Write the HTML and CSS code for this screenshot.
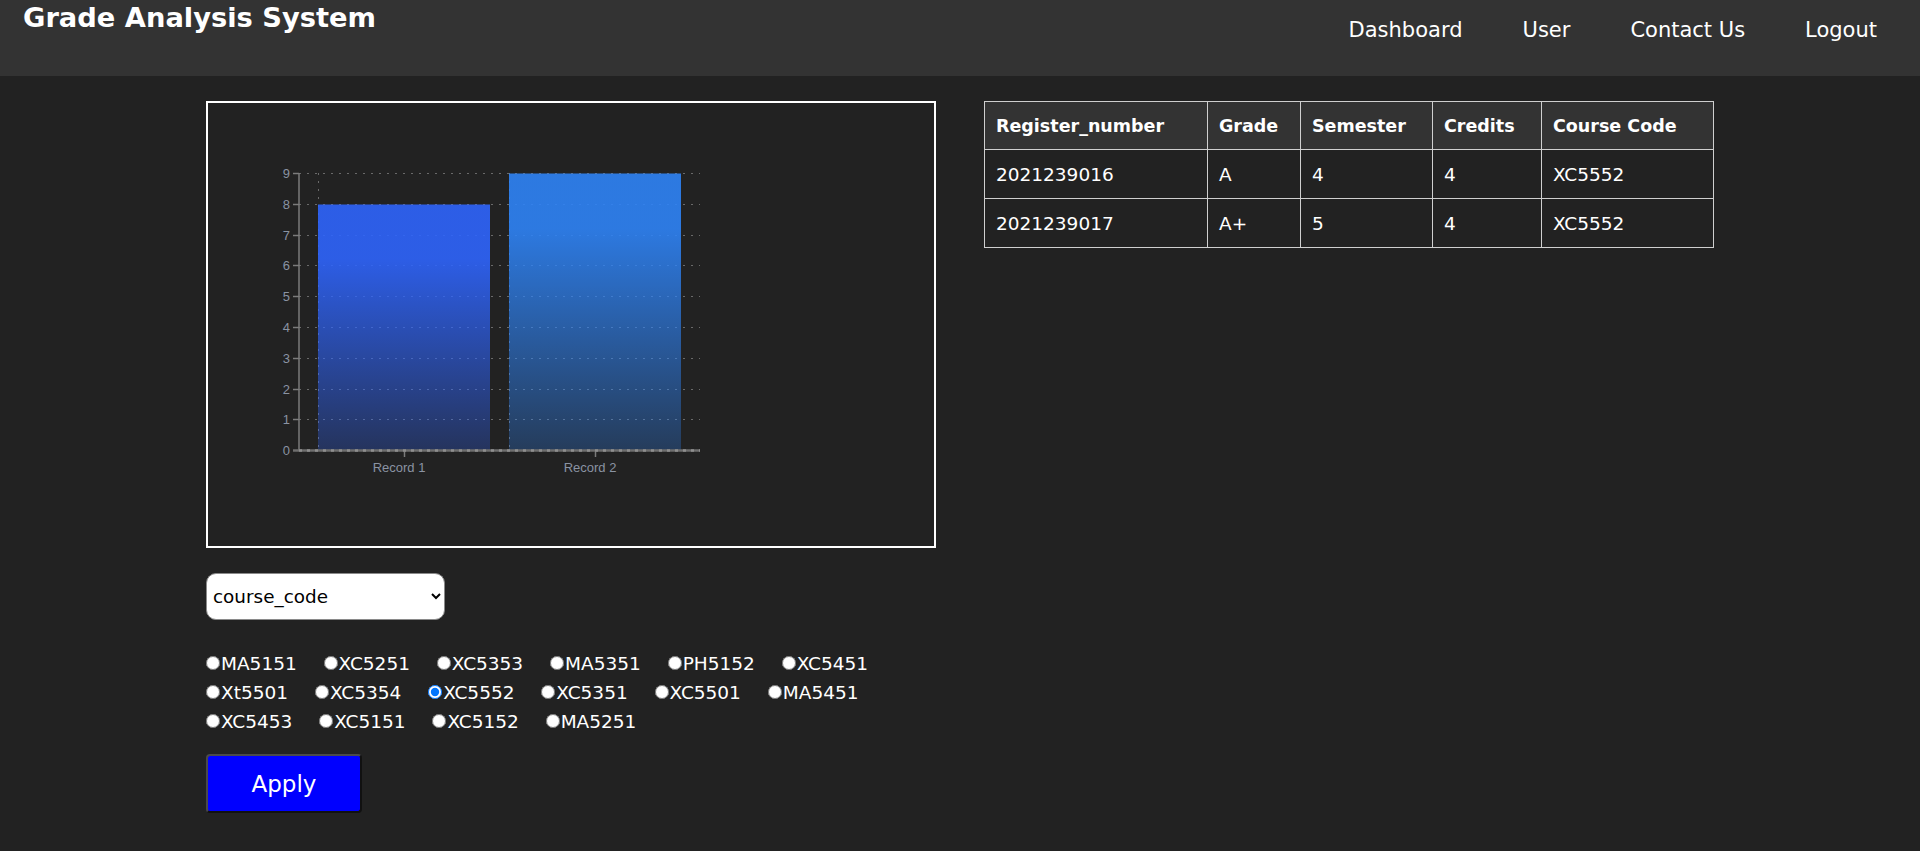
FILE: index.html
```html
<!DOCTYPE html>
<html lang="en">
<head>
<meta charset="utf-8">
<title>Grade Analysis System</title>
<link rel="stylesheet" href="styles.css">
</head>
<body>
<header class="topbar">
  <h1 class="brand">Grade Analysis System</h1>
  <nav class="nav">
    <a href="#" class="nav-link">Dashboard</a>
    <a href="#" class="nav-link">User</a>
    <a href="#" class="nav-link">Contact Us</a>
    <a href="#" class="nav-link">Logout</a>
  </nav>
</header>

<main class="page">
  <section class="left">
    <div class="chart-box">
      <svg class="chart" viewBox="208 103 726 443" width="726" height="443" xmlns="http://www.w3.org/2000/svg">
        <defs>
          <linearGradient id="bar1" x1="0" y1="0" x2="0" y2="1">
            <stop offset="0.22" stop-color="#2e64fc" stop-opacity="0.9"/>
            <stop offset="1" stop-color="#2e64fc" stop-opacity="0.27"/>
          </linearGradient>
          <linearGradient id="bar2" x1="0" y1="0" x2="0" y2="1">
            <stop offset="0.2" stop-color="#2e83f6" stop-opacity="0.9"/>
            <stop offset="1" stop-color="#2e83f6" stop-opacity="0.27"/>
          </linearGradient>
        </defs>
        <g class="grid">
          <line x1="299" y1="173.5" x2="700" y2="173.5"/>
          <line x1="299" y1="204.5" x2="700" y2="204.5"/>
          <line x1="299" y1="235.5" x2="700" y2="235.5"/>
          <line x1="299" y1="265.5" x2="700" y2="265.5"/>
          <line x1="299" y1="296.5" x2="700" y2="296.5"/>
          <line x1="299" y1="327.5" x2="700" y2="327.5"/>
          <line x1="299" y1="358.5" x2="700" y2="358.5"/>
          <line x1="299" y1="389.5" x2="700" y2="389.5"/>
          <line x1="299" y1="419.5" x2="700" y2="419.5"/>
          <line x1="318.5" y1="173" x2="318.5" y2="450"/>
          <line x1="509.5" y1="173" x2="509.5" y2="450"/>
        </g>
        <rect x="318" y="204.5" width="172" height="246" fill="url(#bar1)"/>
        <rect x="509" y="173.5" width="172" height="277" fill="url(#bar2)"/>
        <g class="axis">
          <line x1="299" y1="173" x2="299" y2="451"/>
          <line x1="293" y1="173.5" x2="299" y2="173.5"/>
          <line x1="293" y1="204.5" x2="299" y2="204.5"/>
          <line x1="293" y1="235.5" x2="299" y2="235.5"/>
          <line x1="293" y1="265.5" x2="299" y2="265.5"/>
          <line x1="293" y1="296.5" x2="299" y2="296.5"/>
          <line x1="293" y1="327.5" x2="299" y2="327.5"/>
          <line x1="293" y1="358.5" x2="299" y2="358.5"/>
          <line x1="293" y1="389.5" x2="299" y2="389.5"/>
          <line x1="293" y1="419.5" x2="299" y2="419.5"/>
          <line x1="404.5" y1="451" x2="404.5" y2="457"/>
          <line x1="595.5" y1="451" x2="595.5" y2="457"/>
        </g>
        <line class="x-axis" x1="293" y1="450.5" x2="700" y2="450.5"/>
        <line class="x-axis-dots" x1="299" y1="450.5" x2="700" y2="450.5"/>
        <g class="ticks">
          <text x="290" y="178">9</text>
          <text x="290" y="209">8</text>
          <text x="290" y="240">7</text>
          <text x="290" y="270">6</text>
          <text x="290" y="301">5</text>
          <text x="290" y="332">4</text>
          <text x="290" y="363">3</text>
          <text x="290" y="394">2</text>
          <text x="290" y="424">1</text>
          <text x="290" y="455">0</text>
        </g>
        <g class="xticks">
          <text x="399" y="472">Record 1</text>
          <text x="590" y="472">Record 2</text>
        </g>
      </svg>
    </div>

    <select class="filter">
      <option>course_code</option>
    </select>

    <div class="options">
      <label class="opt"><input type="radio" name="course">MA5151</label>
      <label class="opt"><input type="radio" name="course">XC5251</label>
      <label class="opt"><input type="radio" name="course">XC5353</label>
      <label class="opt"><input type="radio" name="course">MA5351</label>
      <label class="opt"><input type="radio" name="course">PH5152</label>
      <label class="opt"><input type="radio" name="course">XC5451</label>
      <label class="opt"><input type="radio" name="course">Xt5501</label>
      <label class="opt"><input type="radio" name="course">XC5354</label>
      <label class="opt"><input type="radio" name="course" checked>XC5552</label>
      <label class="opt"><input type="radio" name="course">XC5351</label>
      <label class="opt"><input type="radio" name="course">XC5501</label>
      <label class="opt"><input type="radio" name="course">MA5451</label>
      <label class="opt"><input type="radio" name="course">XC5453</label>
      <label class="opt"><input type="radio" name="course">XC5151</label>
      <label class="opt"><input type="radio" name="course">XC5152</label>
      <label class="opt"><input type="radio" name="course">MA5251</label>
    </div>

    <button class="apply" type="button">Apply</button>
  </section>

  <section class="right">
    <table class="grades">
      <colgroup>
        <col class="c-reg">
        <col class="c-grade">
        <col class="c-sem">
        <col class="c-cred">
        <col class="c-code">
      </colgroup>
      <thead>
        <tr>
          <th>Register_number</th>
          <th>Grade</th>
          <th>Semester</th>
          <th>Credits</th>
          <th>Course Code</th>
        </tr>
      </thead>
      <tbody>
        <tr>
          <td>2021239016</td>
          <td>A</td>
          <td>4</td>
          <td>4</td>
          <td>XC5552</td>
        </tr>
        <tr>
          <td>2021239017</td>
          <td>A+</td>
          <td>5</td>
          <td>4</td>
          <td>XC5552</td>
        </tr>
      </tbody>
    </table>
  </section>
</main>
</body>
</html>
```

FILE: styles.css
```css
* {
  box-sizing: border-box;
}

html, body {
  margin: 0;
  padding: 0;
}

body {
  background: #222222;
  color: #ffffff;
  font-family: "DejaVu Sans", Verdana, sans-serif;
  min-height: 851px;
}

/* ---------- top bar ---------- */
.topbar {
  height: 76px;
  background: #333333;
  display: flex;
  justify-content: space-between;
  align-items: flex-start;
  padding: 0 13px 0 23px;
}

.brand {
  margin: 0;
  padding-top: 2px;
  font-size: 27.3px;
  font-weight: bold;
  color: #ffffff;
  line-height: normal;
}

.nav {
  display: flex;
  padding-top: 18px;
}

.nav-link {
  color: #ffffff;
  text-decoration: none;
  font-size: 21px;
  padding: 0 30px;
  line-height: normal;
}

/* ---------- page ---------- */
.page {
  width: 1508px;
  margin: 0 auto;
  padding-top: 25px;
  display: flex;
  gap: 48px;
  align-items: flex-start;
}

.left {
  width: 730px;
  display: flex;
  flex-direction: column;
  align-items: flex-start;
}

.chart-box {
  width: 730px;
  height: 447px;
  border: 2px solid #ffffff;
}

.chart {
  display: block;
}

.grid line {
  stroke: #6a6a6a;
  stroke-width: 1;
  stroke-dasharray: 2 6;
}

.axis line {
  stroke: #7b7b7b;
  stroke-width: 1.5;
}

.x-axis {
  stroke: #6e6e6e;
  stroke-width: 2.5;
}

.x-axis-dots {
  stroke: #8e8e8e;
  stroke-width: 2.5;
  stroke-dasharray: 3 5;
}

.ticks text {
  font-family: "Liberation Sans", Arial, sans-serif;
  font-size: 13px;
  fill: #8a93a2;
  text-anchor: end;
}

.xticks text {
  font-family: "Liberation Sans", Arial, sans-serif;
  font-size: 13px;
  fill: #8a93a2;
  text-anchor: middle;
}

/* ---------- filter ---------- */
.filter {
  margin-top: 25px;
  width: 239px;
  height: 47px;
  background-color: #ffffff;
  color: #000000;
  border: 1px solid #8a8a8a;
  border-radius: 10px;
  padding: 0 8px 0 2px;
  font-family: "DejaVu Sans", Verdana, sans-serif;
  font-size: 18.4px;
}

.options {
  margin-top: 29px;
  width: 730px;
  font-size: 18.5px;
  line-height: 29px;
  color: #ffffff;
}

.opt {
  margin-right: 21px;
  white-space: nowrap;
}

.opt input {
  width: 14px;
  height: 14px;
  margin: 0 1px 0 0;
}

.apply {
  margin-top: 18px;
  width: 156px;
  height: 59px;
  background: #0000ff;
  color: #ffffff;
  font-family: "DejaVu Sans", Verdana, sans-serif;
  font-size: 23px;
  border: 2px solid;
  border-color: #4a4a4a #111111 #111111 #4a4a4a;
  border-radius: 4px;
}

/* ---------- table ---------- */
.right {
  width: 729px;
}

.grades {
  border-collapse: collapse;
  table-layout: fixed;
  width: 729px;
}

.c-reg { width: 223px; }
.c-grade { width: 93px; }
.c-sem { width: 132px; }
.c-cred { width: 109px; }
.c-code { width: 172px; }

.grades th,
.grades td {
  border: 1px solid #cfcfcf;
  text-align: left;
  padding: 0 11px;
  color: #ffffff;
  white-space: nowrap;
}

.grades thead tr {
  height: 48px;
}

.grades tbody tr {
  height: 49px;
}

.grades th {
  background: #333333;
  font-size: 17.5px;
  font-weight: bold;
}

.grades td {
  background: #222222;
  font-size: 18.5px;
}
```
